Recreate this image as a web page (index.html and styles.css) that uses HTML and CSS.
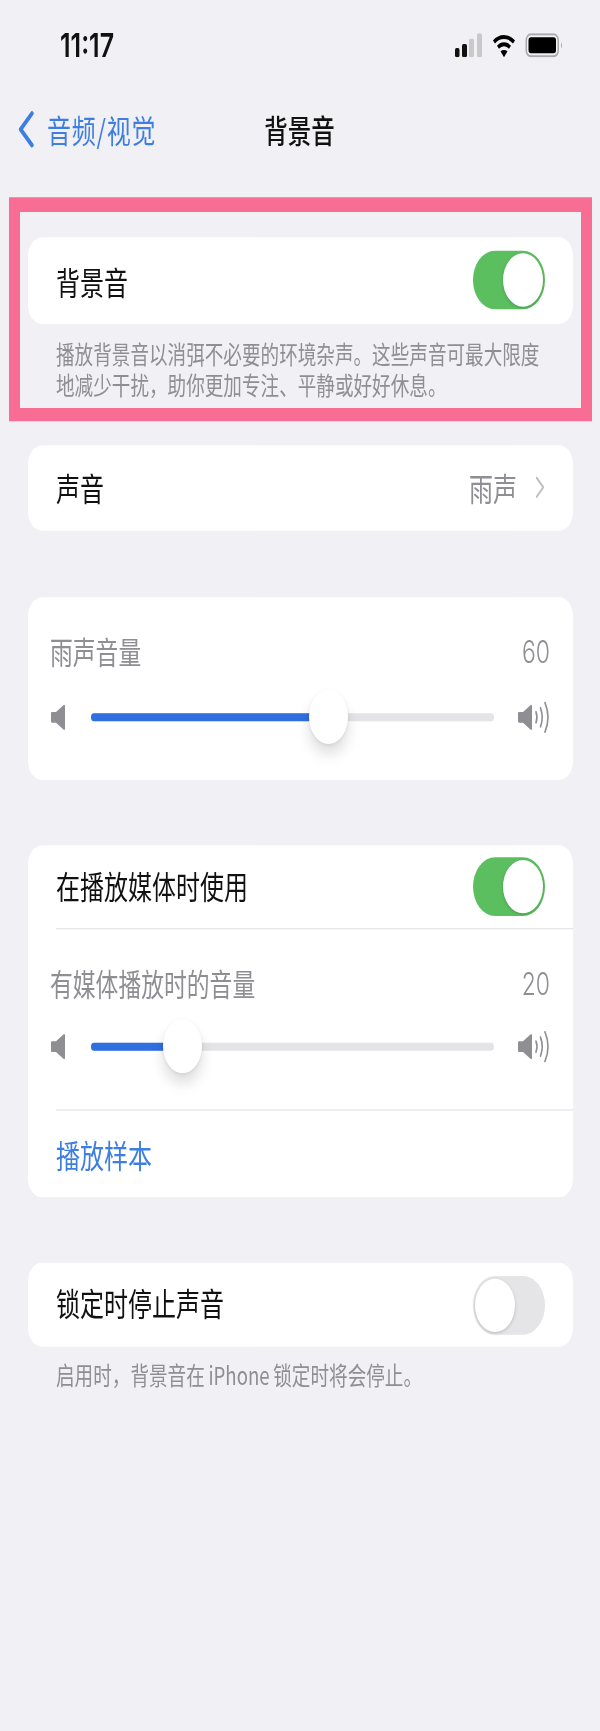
FILE: index.html
```html
<!DOCTYPE html>
<html lang="zh-CN">
<head>
<meta charset="utf-8">
<title>背景音</title>
<link rel="stylesheet" href="styles.css">
</head>
<body>
<div class="shell">
<div class="page">
  <header class="status">
    <span class="time">11:17</span>
    <div class="status-icons">
      <svg class="signal" viewBox="0 0 28 18"><rect x="0" y="11" width="4.5" height="7" rx="1.5" fill="#111"/><rect x="7" y="8" width="5" height="10" rx="1.5" fill="#111"/><rect x="14" y="4" width="5" height="14" rx="1.5" fill="#c9c9cc"/><rect x="22" y="0" width="5" height="18" rx="1.5" fill="#c9c9cc"/></svg>
      <svg class="wifi" viewBox="0 0 23 18"><path d="M1.5 6.5C7 1.5 16 1.5 21.500 6.500" fill="none" stroke="#000" stroke-width="3"/><path d="M5.500 10.500C9 7.500 14 7.500 17.500 10.500" fill="none" stroke="#000" stroke-width="3"/><path d="M8 13.500Q11.500 11.500 15 13.500L11.500 18Z" fill="#000"/></svg>
      <svg class="battery" viewBox="0 0 38 18"><rect x="0.750" y="0.750" width="32" height="16.500" rx="4.500" fill="none" stroke="#a9a9ac" stroke-width="1.500"/><rect x="3" y="3" width="27.500" height="12" rx="2.500" fill="#000"/><path d="M35.500 6.500Q37.500 9 35.500 11.500Z" fill="#a9a9ac"/></svg>
    </div>
  </header>

  <nav class="nav">
    <div class="back">
      <svg class="back-chevron" viewBox="0 0 16 26"><path d="M13.500 2L3 13L13.500 24" fill="none" stroke="#3d7ee0" stroke-width="3.200" stroke-linecap="round" stroke-linejoin="round"/></svg>
      <span>音频/视觉</span>
    </div>
    <h1 class="title">背景音</h1>
  </nav>

  <section class="highlight">
    <div class="card row row-first">
      <span class="label">背景音</span>
      <span class="toggle on"><span class="knob"></span></span>
    </div>
    <p class="note">播放背景音以消弭不必要的环境杂声。这些声音可最大限度<br>地减少干扰，助你更加专注、平静或好好休息。</p>
  </section>

  <section class="card row group-sound">
    <span class="label">声音</span>
    <span class="value"><span class="value-text">雨声</span>
      <svg class="chevron" viewBox="0 0 10 18"><path d="M1.500 1.500L8.500 9L1.500 16.500" fill="none" stroke="#bdbdc2" stroke-width="1.800" stroke-linecap="round" stroke-linejoin="round"/></svg>
    </span>
  </section>

  <section class="card group-rain">
    <div class="slider-block">
      <div class="slider-head"><span>雨声音量</span><span class="num">60</span></div>
      <div class="slider">
        <svg class="spk-s" viewBox="0 0 14 20"><path d="M1 6H5L13 0.500Q14 0.500 14 1.500V18.500Q14 19.500 13 19.500L5 14H1Q0 14 0 13V7Q0 6 1 6Z" fill="#8e8e93"/></svg>
        <div class="track"><div class="fill" style="width:59%"><span class="thumb"></span></div></div>
        <svg class="spk-l" viewBox="0 0 32 24"><path d="M1 8H5L13 2.500Q14 2.500 14 3.500V20.500Q14 21.500 13 21.500L5 16H1Q0 16 0 15V9Q0 8 1 8Z" fill="#8e8e93"/><g fill="none" stroke="#8e8e93" stroke-width="1.600" stroke-linecap="round"><path d="M18 8Q20 12 18 16"/><path d="M22.500 5Q26 12 22.500 19"/><path d="M27 1Q33 12 27 23"/></g></svg>
      </div>
    </div>
  </section>

  <section class="card group-media">
    <div class="row row-media">
      <span class="label">在播放媒体时使用</span>
      <span class="toggle on"><span class="knob"></span></span>
    </div>
    <div class="slider-block media-slider">
      <div class="slider-head"><span>有媒体播放时的音量</span><span class="num">20</span></div>
      <div class="slider">
        <svg class="spk-s" viewBox="0 0 14 20"><path d="M1 6H5L13 0.500Q14 0.500 14 1.500V18.500Q14 19.500 13 19.500L5 14H1Q0 14 0 13V7Q0 6 1 6Z" fill="#8e8e93"/></svg>
        <div class="track"><div class="fill" style="width:22.6%"><span class="thumb"></span></div></div>
        <svg class="spk-l" viewBox="0 0 32 24"><path d="M1 8H5L13 2.500Q14 2.500 14 3.500V20.500Q14 21.500 13 21.500L5 16H1Q0 16 0 15V9Q0 8 1 8Z" fill="#8e8e93"/><g fill="none" stroke="#8e8e93" stroke-width="1.600" stroke-linecap="round"><path d="M18 8Q20 12 18 16"/><path d="M22.500 5Q26 12 22.500 19"/><path d="M27 1Q33 12 27 23"/></g></svg>
      </div>
    </div>
    <div class="row row-link"><span class="link">播放样本</span></div>
  </section>

  <section class="group-lock">
    <div class="card row">
      <span class="label">锁定时停止声音</span>
      <span class="toggle off"><span class="knob"></span></span>
    </div>
    <p class="note note-lock">启用时，背景音在&#8201;iPhone&#8201;锁定时将会停止。</p>
  </section>
</div>
</div>
</body>
</html>
```

FILE: styles.css
```css
html, body {
  margin: 0;
  padding: 0;
  background: #f0f0f5;
}

.shell {
  width: 600px;
  height: 1731px;
  overflow: hidden;
  filter: blur(0.4px);
}

.page {
  width: 600px;
  height: 1298.250px;
  transform: scaleY(1.3333);
  transform-origin: top left;
  font-family: "Noto Sans CJK SC", "Noto Sans", sans-serif;
  color: #111;
}

.status {
  height: 68px;
  padding: 0 36px 0 60px;
  display: flex;
  align-items: center;
  justify-content: space-between;
  box-sizing: border-box;
}

.time {
  font-family: Inter, "Liberation Sans", sans-serif;
  font-size: 25px;
  font-weight: 600;
}

.status-icons {
  display: flex;
  align-items: center;
}

.signal { width: 28px; height: 18px; }
.wifi { width: 24px; height: 18px; margin-left: 9px; }
.battery { width: 39px; height: 18px; margin-left: 9px; }

.nav {
  height: 60px;
  padding: 0 18px 3px 17px;
  box-sizing: border-box;
  display: grid;
  grid-template-columns: 1fr auto 1fr;
  align-items: center;
}

.back {
  display: flex;
  align-items: center;
  gap: 12px;
  color: #3d7ee0;
  font-size: 24px;
  letter-spacing: 0.8px;
  white-space: nowrap;
}

.back-chevron { width: 18px; height: 28px; }

.title {
  margin: 0;
  font-size: 23.500px;
  font-weight: 500;
}

.highlight {
  margin: 19.700px 8px 0 9px;
  border-style: solid;
  border-color: #f76d94;
  border-width: 11.500px 11px 10.500px;
  padding: 19.500px 8.500px 6.500px 7.500px;
}

.card {
  background: #fff;
  border-radius: 14px;
}

.row {
  display: flex;
  align-items: center;
  justify-content: space-between;
  padding: 0 27.500px 0 28.500px;
  height: 64.500px;
  box-sizing: border-box;
}

.label {
  font-size: 24px;
  white-space: nowrap;
  margin-bottom: 3px;
}

.row-first .label {
  margin-top: 1px;
  margin-bottom: 0;
}

.note {
  margin: 0;
  padding: 10.500px 0 0 28.500px;
  font-size: 18.600px;
  line-height: 23px;
  color: #8e8e93;
  white-space: nowrap;
}

.toggle {
  width: 72px;
  height: 44px;
  border-radius: 22px;
  padding: 2px;
  box-sizing: border-box;
  display: flex;
}

.toggle.on { background: #5bbf60; justify-content: flex-end; }
.toggle.off { background: #e5e5e7; justify-content: flex-start; }

.knob {
  width: 40px;
  height: 40px;
  border-radius: 50%;
  background: #fff;
  box-shadow: 0 1px 3px rgba(0, 0, 0, 0.18);
}

.group-sound {
  margin: 18px 27.500px 0;
  height: 64px;
}

.group-sound .label { margin-bottom: 0; }

.value {
  display: flex;
  align-items: center;
  gap: 18px;
  font-size: 24px;
  color: #8e8e93;
}

.chevron { width: 10px; height: 17px; }

.group-rain {
  margin: 50.600px 27.500px 0;
  height: 137px;
}

.slider-block { padding: 28.300px 22.500px 0 22.500px; }

.slider-head {
  height: 24px;
  display: flex;
  align-items: center;
  justify-content: space-between;
  font-size: 22.800px;
  color: #8e8e93;
  white-space: nowrap;
}

.num {
  font-family: Inter, "Liberation Sans", sans-serif;
  font-size: 23px;
  font-weight: 300;
}

.slider {
  margin-top: 25.500px;
  height: 24px;
  display: flex;
  align-items: center;
}

.spk-s { width: 14px; height: 20px; margin: 0 26px 0 1px; flex: none; }
.spk-l { width: 32px; height: 24px; margin-left: 24px; flex: none; }

.track {
  flex: 1;
  height: 6px;
  border-radius: 3px;
  background: #e4e4e6;
}

.fill {
  position: relative;
  height: 100%;
  border-radius: 3px;
  background: #2f6fe0;
}

.thumb {
  position: absolute;
  right: -19.500px;
  top: -18.500px;
  width: 39px;
  height: 41px;
  border-radius: 50%;
  background: #fff;
  box-shadow: 0 8px 12px rgba(0, 0, 0, 0.13), 0 1px 3px rgba(0, 0, 0, 0.08);
}

.group-media {
  margin: 48.400px 27.500px 0;
  height: 264px;
  box-sizing: border-box;
}

.row-media { height: 62px; }
.row-media .label { margin-bottom: 2px; }
.row-media .toggle { margin-top: 1px; }

.media-slider {
  height: 137px;
  box-sizing: border-box;
  margin-left: 28px;
  padding: 29px 22.500px 0 0;
  border-top: 1.500px solid #e6e6ea;
  border-bottom: 1.500px solid #e6e6ea;
}

.media-slider .slider-head,
.media-slider .slider { margin-left: -5.500px; }

.media-slider .slider { margin-top: 23.500px; }

.row-link { height: 65px; }

.link {
  font-size: 24px;
  color: #3d7ee0;
}

.group-lock { margin: 49.800px 27.500px 0; }
.group-lock .row { height: 63px; }
.group-lock .label { margin-bottom: 4px; }
.note-lock { padding-top: 8.500px; }
```
